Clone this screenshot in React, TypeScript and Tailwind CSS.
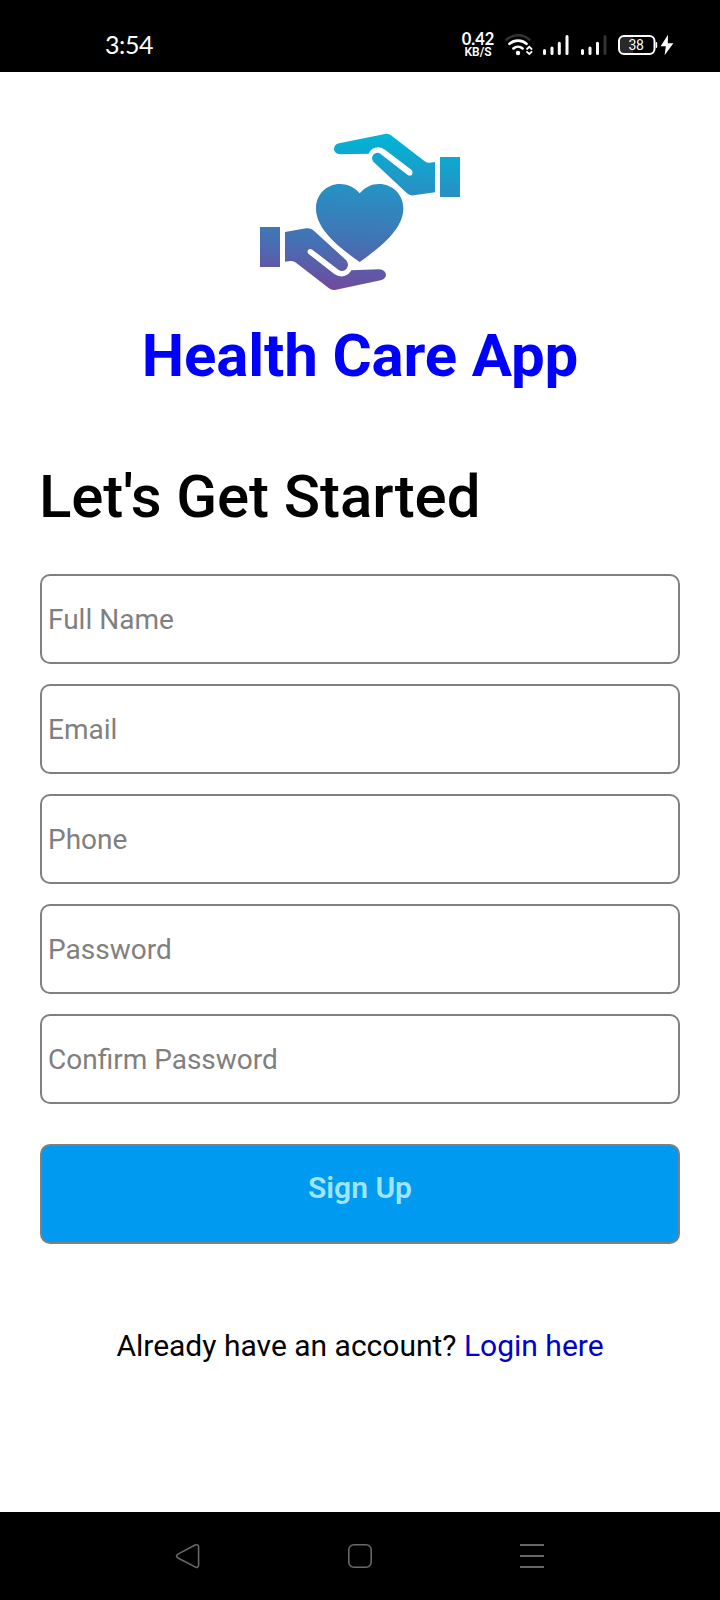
import React from "react";

const fields = ["Full Name", "Email", "Phone", "Password", "Confirm Password"];

function StatusBar() {
  return (
    <header className="flex h-[72px] shrink-0 items-start justify-between bg-black pl-[105px] pr-[34px] text-white">
      <span className="mt-[29px] font-['Lato','Roboto',sans-serif] text-[25px] leading-[30px] tracking-[-0.4px]">3:54</span>
      <div className="flex items-start">
        <div className="mt-[32px] flex w-[34px] flex-col items-center whitespace-nowrap">
          <span className="font-['Lato',sans-serif] text-[16.5px] font-bold leading-[14px]">0.42</span>
          <span className="font-['Roboto',sans-serif] text-[12px] font-semibold leading-[12px]">KB/S</span>
        </div>
        <svg className="mt-[30px] ml-[9px]" width="182" height="30" viewBox="504 30 182 30" fill="none" strokeLinecap="round">
          <path d="M506.5 39.7a17 17 0 0 1 23 0" stroke="#333" strokeWidth="2.5" />
          <path d="M509.5 43.8a13 13 0 0 1 17 0M513.4 48.4a7 7 0 0 1 9.2 0" stroke="#fff" strokeWidth="2.6" />
          <circle cx="518" cy="53" r="2.2" fill="#fff" />
          <path d="M527 49l2.3-2.2 2.3 2.2M527 51.8l2.3 2.2 2.3-2.2" stroke="#fff" strokeWidth="1.8" />
          <path d="M544.5 50.5v3M552 48v5.5M559.3 43.3v10.2M567 36.5v17" stroke="#fff" strokeWidth="3" />
          <path d="M582.5 50.5v3M590 48v5.5M597.5 43.3v10.2" stroke="#fff" strokeWidth="3" />
          <path d="M605 36.5v17" stroke="#333" strokeWidth="3" />
          <path d="M623 37h10v16h-10q-3 0-3-4v-8q0-4 3-4z" fill="#292929" />
          <rect x="619" y="36" width="35.5" height="18" rx="5" stroke="#fff" strokeWidth="2" />
          <path d="M656.4 42.7v4.5" stroke="#fff" strokeWidth="1.6" />
          <text x="636" y="50" textAnchor="middle" fill="#fff" className="font-['Roboto',sans-serif] text-[14px] tracking-[-0.3px]">38</text>
          <path d="M668 34.8l-7.4 11.5h5.2l-1.2 8.9 8.8-12h-5.6z" fill="#fff" />
        </svg>
      </div>
    </header>
  );
}

function Logo() {
  return (
    <svg width="220" height="175" viewBox="0 0 660 525" className="shrink-0">
      <defs>
        <linearGradient id="care" gradientUnits="userSpaceOnUse" x1="350" y1="25" x2="320" y2="495">
          <stop offset="0" stopColor="#00b5d6" />
          <stop offset="0.35" stopColor="#2791c3" />
          <stop offset="0.5" stopColor="#3284bd" />
          <stop offset="0.72" stopColor="#4670b3" />
          <stop offset="1" stopColor="#704a9f" />
        </linearGradient>
      </defs>
      <g fill="url(#care)">
        <path d="M570 96h60v120h-60z" />
        <path d="M30 306h60v120h-60z" />
        <path d="M555 111L538 113Q530 114 523 108L423 31Q415 25 405 27L267 55Q252 59 252 72Q253 87 271 88L356 86Q363 68 385 67Q396 67 406 75L485 135Q491 142 486 149Q480 154 473 150L391 86Q381 79 371 88Q362 99 370 110L471 205Q479 213 491 211L555 202Z" />
        <path d="M105 321L168 310Q181 308 190 316L288 405Q299 417 290 431Q279 443 266 435L187 374Q180 369 174 375Q170 382 177 388L253 447Q267 457 283 453Q298 448 304 436L387 433Q407 435 408 450Q407 462 392 466L258 494Q246 497 237 490L138 413Q131 407 121 408L105 410Z" />
        <path d="M329 205C312 185 292 177 270 177C229 177 198 209 198 250C198 304 246 353 329 411C412 353 460 304 460 250C460 209 428 177 387 177C364 177 345 187 329 205Z" />
      </g>
    </svg>
  );
}

function NavBar() {
  return (
    <nav className="flex h-[88px] shrink-0 items-center justify-between bg-black px-[174px]">
      <svg width="28" height="28" viewBox="0 0 28 28" fill="none" stroke="#686868" strokeWidth="1.6">
        <path d="M4 12.1L21 3.1Q24.5 1.7 24.6 5V23Q24.4 26.5 21 24.9L4 16Q1 14 4 12.1Z" />
      </svg>
      <svg width="28" height="28" viewBox="0 0 28 28" fill="none" stroke="#686868" strokeWidth="1.6">
        <rect x="2.8" y="2.8" width="22.4" height="22.4" rx="5" />
      </svg>
      <svg width="28" height="28" viewBox="0 0 28 28" fill="none" stroke="#686868" strokeWidth="2">
        <path d="M2 3h24M2 14h24M2 25h24" />
      </svg>
    </nav>
  );
}

export default function App() {
  return (
    <div className="flex h-[1600px] w-[720px] flex-col overflow-hidden bg-white font-['Roboto',sans-serif]">
      <StatusBar />
      <main className="flex flex-1 flex-col px-10 pt-[53px]">
        <div className="flex flex-col items-center">
          <Logo />
          <h1 className="mt-5 whitespace-nowrap text-[60px] font-bold leading-[72px] tracking-[-0.15px] text-[#0000ff]">Health Care App</h1>
        </div>
        <h2 className="-ml-px mt-[69px] whitespace-nowrap text-[60px] font-medium leading-[72px] tracking-[-0.1px] text-black">Let's Get Started</h2>
        <form className="mt-[41px] flex flex-col gap-5" onSubmit={(e) => e.preventDefault()}>
          {fields.map((label) => (
            <input
              key={label}
              placeholder={label}
              aria-label={label}
              className="h-[90px] w-full rounded-[10px] border-2 border-[#808080] bg-white px-1.5 text-[28px] placeholder:text-[#808080] placeholder:opacity-100"
            />
          ))}
          <button className="mt-5 flex h-[100px] w-full justify-center rounded-[10px] border-2 border-[#808080] bg-[#009bf0] pt-[24px] text-[30px] font-semibold leading-[36px] text-[#a0e4ff]">
            Sign Up
          </button>
        </form>
        <p className="mt-[84px] whitespace-nowrap text-center text-[30px] leading-[36px] text-black">
          Already have an account? <a className="text-[#0000cd]">Login here</a>
        </p>
      </main>
      <NavBar />
    </div>
  );
}
